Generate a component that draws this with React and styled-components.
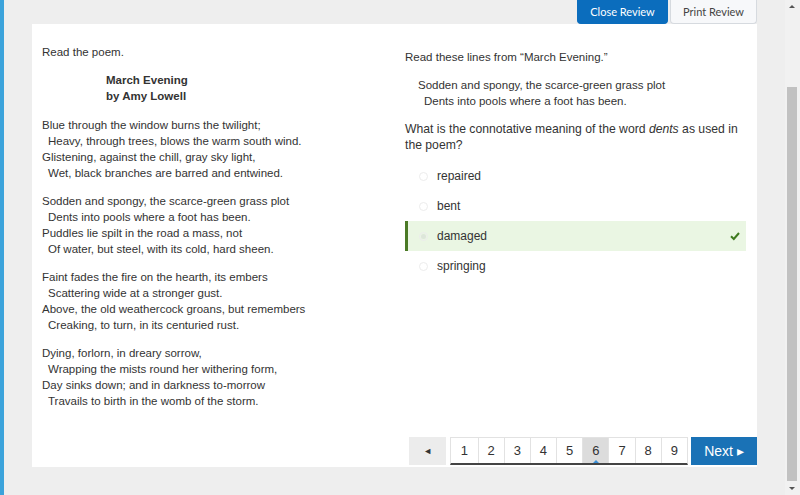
import React from 'react';
import styled, { createGlobalStyle } from 'styled-components';

const GlobalStyle = createGlobalStyle`
  html, body {
    margin: 0;
    padding: 0;
    background: #eeeeee;
    font-family: 'Liberation Sans', Arial, sans-serif;
    color: #333333;
  }
  * { box-sizing: border-box; }
`;

const Page = styled.div`
  display: flex;
  width: 800px;
  height: 495px;
  overflow: hidden;
  background: #eeeeee;
`;

const BlueBar = styled.div`
  width: 4px;
  background: #3ba3db;
`;

const Main = styled.div`
  flex: 1;
  display: flex;
  flex-direction: column;
  padding: 0 28px 28px 28px;
`;

const TopBar = styled.div`
  height: 24px;
  display: flex;
  justify-content: flex-end;
  gap: 2px;
`;

const TopButton = styled.button`
  width: ${(p) => p.$w}px;
  height: 24px;
  border-radius: 0 0 4px 4px;
  font-family: Lato, 'Liberation Sans', sans-serif;
  font-size: 11px;
  cursor: pointer;
  background: ${(p) => (p.$primary ? '#0b6dbd' : '#f7f8fa')};
  color: ${(p) => (p.$primary ? '#ffffff' : '#444444')};
  border: 1px solid ${(p) => (p.$primary ? '#0b6dbd' : '#d6dadf')};
  border-top: none;
  padding: 0;
`;

const Card = styled.div`
  flex: 1;
  background: #ffffff;
  display: flex;
  flex-direction: column;
  padding: 20px 0 0 10px;
`;

const Columns = styled.div`
  flex: 1;
  display: grid;
  grid-template-columns: 363px 342px;
  font-size: 11.5px;
  line-height: 16px;
`;

const Column = styled.div`
  padding-top: ${(p) => p.$top || 0}px;
`;

const Para = styled.p`
  margin: 0 0 12px 0;
`;

const Question = styled.p`
  margin: 0;
  font-size: 12.2px;
`;

const Title = styled.div`
  font-weight: bold;
  padding-left: 64px;
  margin-bottom: 13px;
`;

const Stanza = styled.div`
  margin-bottom: 12px;
`;

const Line = styled.div`
  padding-left: ${(p) => (p.$indent ? 6 : 0)}px;
  white-space: nowrap;
`;

const Quote = styled.div`
  padding-left: 13px;
  margin-bottom: 12px;
`;

const Options = styled.div`
  margin-top: 8px;
  display: flex;
  flex-direction: column;
`;

const Option = styled.div`
  height: 30px;
  display: flex;
  align-items: center;
  padding-left: 11px;
  border-left: 3px solid ${(p) => (p.$correct ? '#4b7a26' : 'transparent')};
  background: ${(p) => (p.$correct ? '#eaf6e3' : 'transparent')};
  width: 341px;
`;

const Radio = styled.span`
  width: 9px;
  height: 9px;
  border-radius: 50%;
  border: 1px solid #ececec;
  margin-right: 9px;
  display: flex;
  align-items: center;
  justify-content: center;
  &::after {
    content: '';
    width: 5px;
    height: 5px;
    border-radius: 50%;
    background: ${(p) => (p.$checked ? '#dde6da' : 'transparent')};
  }
`;

const OptionText = styled.span`
  flex: 1;
  font-size: 12px;
`;

const Check = styled.svg`
  width: 10px;
  height: 10px;
  margin-right: 6px;
`;

const Footer = styled.div`
  display: flex;
  justify-content: flex-end;
  align-items: flex-start;
  height: 30px;
  font-family: 'Liberation Sans', Arial, sans-serif;
`;

const PrevButton = styled.button`
  width: 37px;
  height: 28px;
  border: none;
  background: #ececec;
  color: #333;
  font-size: 9px;
  margin-right: 4px;
  padding: 0;
`;

const Pages = styled.div`
  display: flex;
  height: 28px;
  border: 1px solid #e2e2e2;
  border-bottom: 2px solid #444444;
  margin-right: 3px;
`;

const PageNum = styled.div`
  position: relative;
  width: 26.2px;
  display: flex;
  align-items: center;
  justify-content: center;
  font-size: 13px;
  color: #333;
  background: ${(p) => (p.$active ? '#dcdcdc' : '#ffffff')};
  border-left: ${(p) => (p.$first ? 'none' : '1px solid #e2e2e2')};
  &::after {
    content: '';
    display: ${(p) => (p.$active ? 'block' : 'none')};
    position: absolute;
    bottom: 0;
    left: 50%;
    margin-left: -3px;
    border-left: 3px solid transparent;
    border-right: 3px solid transparent;
    border-bottom: 3px solid #3a8fd6;
  }
`;

const NextButton = styled.button`
  width: 66px;
  height: 28px;
  border: none;
  background: #1a72b6;
  color: #ffffff;
  font-family: 'Liberation Sans', Arial, sans-serif;
  font-size: 14px;
  padding: 0;
`;

const Scrollbar = styled.div`
  width: 15px;
  display: flex;
  flex-direction: column;
  align-items: center;
  background: #f1f1f1;
  padding: 0 2px 0 0;
`;

const Arrow = styled.div`
  height: 14px;
  display: flex;
  align-items: center;
  justify-content: center;
  &::after {
    content: '';
    border-left: 3px solid transparent;
    border-right: 3px solid transparent;
    ${(p) => (p.$down ? 'border-top: 3px solid #555;' : 'border-bottom: 3px solid #555;')}
  }
`;

const TrackSpace = styled.div`
  height: 73px;
`;

const Thumb = styled.div`
  width: 10px;
  height: 395px;
  background: #c1c1c1;
`;

const Filler = styled.div`
  flex: 1;
`;

const stanzas = [
  [
    'Blue through the window burns the twilight;',
    'Heavy, through trees, blows the warm south wind.',
    'Glistening, against the chill, gray sky light,',
    'Wet, black branches are barred and entwined.',
  ],
  [
    'Sodden and spongy, the scarce-green grass plot',
    'Dents into pools where a foot has been.',
    'Puddles lie spilt in the road a mass, not',
    'Of water, but steel, with its cold, hard sheen.',
  ],
  [
    'Faint fades the fire on the hearth, its embers',
    'Scattering wide at a stronger gust.',
    'Above, the old weathercock groans, but remembers',
    'Creaking, to turn, in its centuried rust.',
  ],
  [
    'Dying, forlorn, in dreary sorrow,',
    'Wrapping the mists round her withering form,',
    'Day sinks down; and in darkness to-morrow',
    'Travails to birth in the womb of the storm.',
  ],
];

const options = ['repaired', 'bent', 'damaged', 'springing'];

export default function App() {
  return (
    <>
      <GlobalStyle />
      <Page>
        <BlueBar />
        <Main>
          <TopBar>
            <TopButton $primary $w={91}>Close Review</TopButton>
            <TopButton $w={87}>Print Review</TopButton>
          </TopBar>
          <Card>
            <Columns>
              <Column>
                <Para>Read the poem.</Para>
                <Title>
                  <div>March Evening</div>
                  <div>by Amy Lowell</div>
                </Title>
                {stanzas.map((s, i) => (
                  <Stanza key={i}>
                    {s.map((l, j) => (
                      <Line key={j} $indent={j % 2 === 1}>{l}</Line>
                    ))}
                  </Stanza>
                ))}
              </Column>
              <Column $top={5}>
                <Para>Read these lines from “March Evening.”</Para>
                <Quote>
                  <Line>Sodden and spongy, the scarce-green grass plot</Line>
                  <Line $indent>Dents into pools where a foot has been.</Line>
                </Quote>
                <Question>
                  What is the connotative meaning of the word <i>dents</i> as used in the poem?
                </Question>
                <Options>
                  {options.map((o) => (
                    <Option key={o} $correct={o === 'damaged'}>
                      <Radio $checked={o === 'damaged'} />
                      <OptionText>{o}</OptionText>
                      {o === 'damaged' && (
                        <Check viewBox="0 0 10 10">
                          <polyline
                            points="1,5.2 3.8,8 9,2"
                            fill="none"
                            stroke="#3f7a1f"
                            strokeWidth="2"
                          />
                        </Check>
                      )}
                    </Option>
                  ))}
                </Options>
              </Column>
            </Columns>
            <Footer>
              <PrevButton>◄</PrevButton>
              <Pages>
                {[1, 2, 3, 4, 5, 6, 7, 8, 9].map((n) => (
                  <PageNum key={n} $first={n === 1} $active={n === 6}>{n}</PageNum>
                ))}
              </Pages>
              <NextButton>Next ▸</NextButton>
            </Footer>
          </Card>
        </Main>
        <Scrollbar>
          <Arrow />
          <TrackSpace />
          <Thumb />
          <Filler />
          <Arrow $down />
        </Scrollbar>
      </Page>
    </>
  );
}
